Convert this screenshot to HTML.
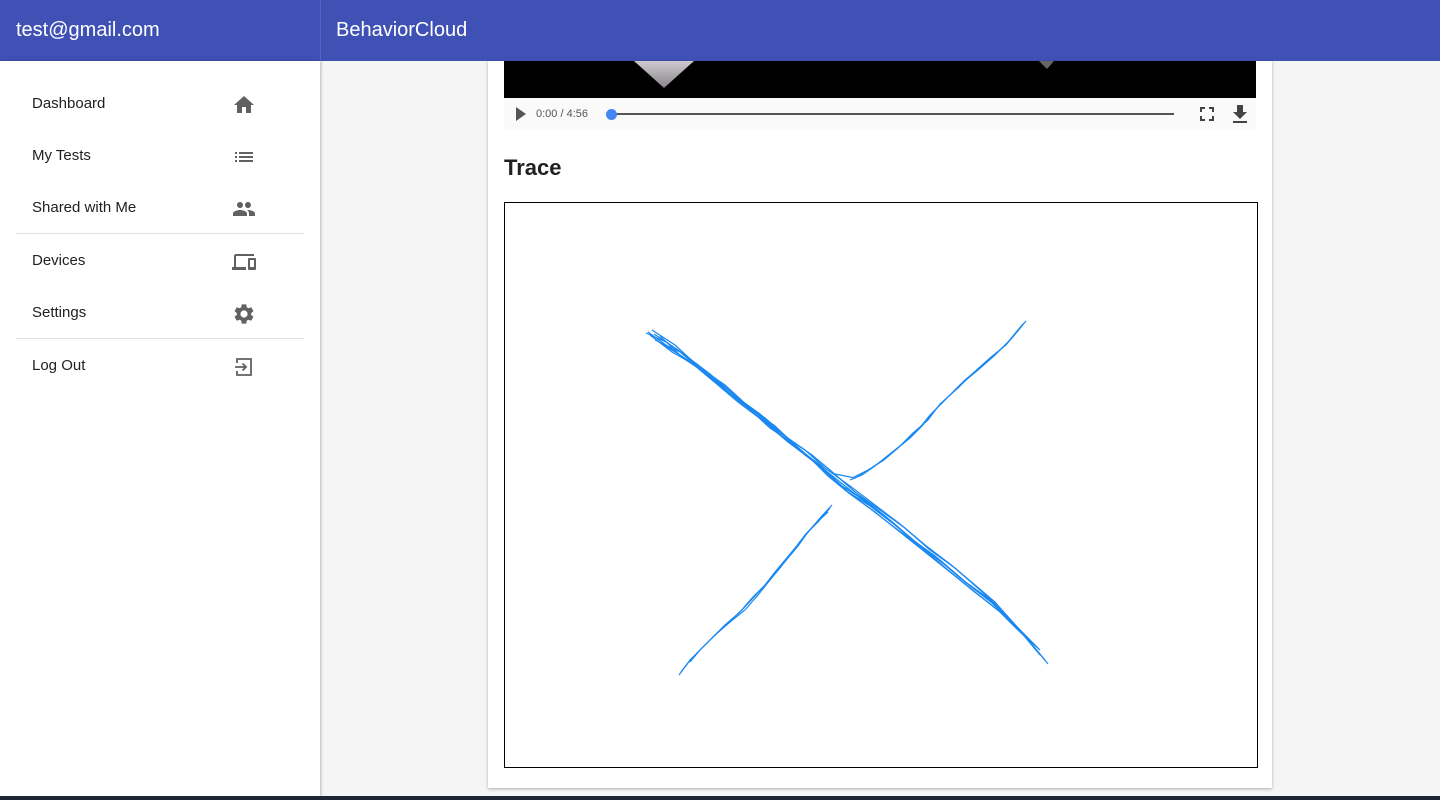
<!DOCTYPE html>
<html><head><style>
*{box-sizing:border-box;margin:0;padding:0}
body{width:1440px;height:800px;overflow:hidden;background:#f5f5f5;font-family:"Liberation Sans",Roboto,sans-serif;position:relative}
.top{position:absolute;left:0;top:0;width:1440px;height:61px;background:#3f51b5;color:#fff;font-size:20px}
.top .a{position:absolute;left:16px;top:19px}
.top .b{position:absolute;left:336px;top:19px}
.top .sep{position:absolute;left:320px;top:0;width:1px;height:61px;background:#5566c0}
.side{position:absolute;left:0;top:61px;width:320px;height:735px;background:#fff;box-shadow:1px 0 3px rgba(0,0,0,.25)}
.item{position:absolute;left:32px;font-size:15px;color:#212121}
.ic{position:absolute;left:232px}
.hr{position:absolute;left:16px;width:288px;height:1px;background:#e0e0e0}
.card{position:absolute;left:488px;top:61px;width:784px;height:727px;background:#fff;box-shadow:0 1px 3px rgba(0,0,0,.3)}
.bottom{position:absolute;left:0;top:796px;width:1440px;height:4px;background:#1e2535}
</style></head><body>
<div class="top"><span class="a">test@gmail.com</span><div class="sep"></div><span class="b">BehaviorCloud</span></div>
<div class="side">
<div class="item" style="top:34px">Dashboard</div>
<svg class="ic" style="top:32px" width="24" height="24" viewBox="0 0 24 24"><path fill="#616161" d="M10 20v-6h4v6h5v-8h3L12 3 2 12h3v8z"/></svg>
<div class="item" style="top:86px">My Tests</div>
<svg class="ic" style="top:84px" width="24" height="24" viewBox="0 0 24 24"><path fill="#616161" d="M3 13h2v-2H3v2zm0 4h2v-2H3v2zm0-8h2V7H3v2zm4 4h14v-2H7v2zm0 4h14v-2H7v2zM7 7v2h14V7H7z"/></svg>
<div class="item" style="top:138px">Shared with Me</div>
<svg class="ic" style="top:136px" width="24" height="24" viewBox="0 0 24 24"><path fill="#616161" d="M16 11c1.66 0 2.99-1.34 2.99-3S17.66 5 16 5c-1.66 0-3 1.34-3 3s1.34 3 3 3zm-8 0c1.66 0 2.99-1.34 2.99-3S9.66 5 8 5C6.34 5 5 6.34 5 8s1.34 3 3 3zm0 2c-2.33 0-7 1.17-7 3.5V19h14v-2.5c0-2.33-4.67-3.5-7-3.5zm8 0c-.29 0-.62.02-.97.05 1.16.84 1.97 1.97 1.97 3.45V19h6v-2.5c0-2.33-4.67-3.5-7-3.5z"/></svg>
<div class="hr" style="top:172px"></div>
<div class="item" style="top:191px">Devices</div>
<svg class="ic" style="top:189px" width="24" height="24" viewBox="0 0 24 24"><path fill="#616161" d="M4 6h18V4H4c-1.1 0-2 .9-2 2v11H0v3h14v-3H4V6zm19 2h-6c-.55 0-1 .45-1 1v10c0 .55.45 1 1 1h6c.55 0 1-.45 1-1V9c0-.55-.45-1-1-1zm-1 9h-4v-7h4v7z"/></svg>
<div class="item" style="top:243px">Settings</div>
<svg class="ic" style="top:241px" width="24" height="24" viewBox="0 0 24 24"><path fill="#616161" d="M19.14 12.94c.04-.3.06-.61.06-.94 0-.32-.02-.64-.07-.94l2.03-1.58a.49.49 0 00.12-.61l-1.92-3.32a.49.49 0 00-.59-.22l-2.39.96c-.5-.38-1.030-.7-1.62-.94l-.36-2.54a.48.48 0 00-.48-.41h-3.84c-.24 0-.43.17-.47.41l-.36 2.54c-.59.24-1.13.57-1.62.94l-2.39-.96a.48.48 0 00-.59.22L2.74 8.87c-.12.21-.08.47.12.61l2.03 1.58c-.05.3-.09.63-.09.94s.02.64.07.94l-2.03 1.58a.49.49 0 00-.12.61l1.920 3.32c.12.22.37.29.59.22l2.39-.96c.5.38 1.03.7 1.62.94l.36 2.54c.05.24.24.41.48.41h3.84c.24 0 .44-.17.47-.41l.36-2.54c.59-.24 1.13-.56 1.62-.94l2.39.96c.22.08.47 0 .59-.22l1.92-3.32c.12-.22.07-.47-.12-.61l-2.01-1.58zM12 15.6A3.6 3.6 0 1112 8.4a3.6 3.6 0 010 7.2z"/></svg>
<div class="hr" style="top:277px"></div>
<div class="item" style="top:296px">Log Out</div>
<svg class="ic" style="top:294px" width="24" height="24" viewBox="0 0 24 24"><path fill="none" stroke="#616161" stroke-width="1.8" d="M5 8V4h14v16H5v-4M3 12h11M10.5 8.5 14 12l-3.5 3.5"/></svg>
</div>
<div class="card">
<div style="position:absolute;left:16px;top:0;width:752px;height:37px;background:#000;overflow:hidden">
<svg width="752" height="37"><defs><linearGradient id="g" x1="0" x2="0" y1="0" y2="1"><stop offset="0" stop-color="#cfcacf"/><stop offset="1" stop-color="#8a858a"/></linearGradient></defs><polygon points="130,0 190,0 160,27" fill="url(#g)"/><polygon points="535,0 550,0 543,8" fill="#666"/></svg></div>
<div style="position:absolute;left:16px;top:37px;width:752px;height:32px;background:#fafafa">
<svg style="position:absolute;left:10px;top:9px" width="14" height="14"><polygon points="2,0 12,7 2,14" fill="#555"/></svg>
<span style="position:absolute;left:32px;top:10px;font-size:11px;color:#555">0:00 / 4:56</span>
<div style="position:absolute;left:107px;top:15px;width:563px;height:2px;background:#555"></div>
<div style="position:absolute;left:102px;top:11px;width:11px;height:11px;border-radius:50%;background:#4285f4"></div>
<svg style="position:absolute;left:696px;top:9px" width="14" height="14"><path d="M1 5V1h4M9 1h4v4M13 9v4H9M5 13H1V9" fill="none" stroke="#444" stroke-width="2"/></svg>
<svg style="position:absolute;left:727px;top:6px" width="18" height="20"><path d="M6 1h6v7h4l-7 7-7-7h4z M2 17h14v2H2z" fill="#444"/></svg>
</div>
<div style="position:absolute;left:16px;top:94px;font-size:22px;font-weight:bold;color:#212121">Trace</div>
<div style="position:absolute;left:16px;top:141px;width:754px;height:566px;border:1px solid #000">
<svg width="752" height="564" viewBox="505 203 752 564" style="position:absolute;left:0;top:0">
<g fill="none" stroke="#1a88f0" stroke-width="1.2">
<path d="M648 332 L670 348 L690 362 L715 378 L740 400 L765 418 L790 440 L812 455 L830 470 L855 492 L880 510 L905 528 L930 550 L955 568 L980 590 L1000 608 L1020 630 L1048 664"/>
<path d="M650 335 L672 352 L695 365 L720 386 L745 405 L770 428 L795 445 L815 462 L835 478 L860 498 L885 516 L910 538 L935 556 L960 578 L985 596 L1005 614 L1025 636 L1045 660"/>
<path d="M652 330 L675 345 L700 368 L725 385 L750 408 L775 426 L800 450 L820 465 L840 485 L865 500 L890 520 L915 542 L940 560 L965 582 L990 600 L1010 620 L1030 640"/>
<path d="M655 340 L680 352 L705 372 L730 394 L755 412 L780 434 L805 455 L825 470 L845 490 L870 506 L895 525 L920 546 L945 565 L970 586 L995 605 L1015 626 L1035 645"/>
<path d="M660 336 L683 358 L710 376 L735 398 L760 418 L785 436 L810 458 L828 476 L850 494 L875 512 L900 532 L925 552 L950 572 L975 592 L1000 612 L1020 632 L1040 650"/>
<path d="M646 333 L666 342 L685 355 L710 374 L735 396 L760 414 L785 436 L805 450 L825 468 L850 486 L875 505 L900 524 L925 545 L950 564 L975 585 L995 602 L1015 625 L1040 655"/>
<path d="M654 334 L678 350 L702 370 L728 390 L752 410 L778 430 L802 452 L822 468 L842 486 L868 503 L892 522 L918 544 L942 562 L968 584 L992 603 L1012 622 L1032 642 L1038 648"/>
<path d="M662 344 L688 360 L712 380 L738 402 L762 420 L788 442 L812 460 L832 478 L848 492 L872 510 L898 530 L922 548 L948 570 L972 590 L998 610 L1018 630"/>
<path d="M1026 321 L1012 338 L1000 350 L982 366 L965 380 L950 395 L935 410 L922 426 L910 438 L895 450 L880 462 L866 472 L855 478 L835 474"/>
<path d="M1022 325 L1008 342 L995 355 L978 370 L960 385 L945 400 L930 415 L918 430 L905 442 L890 454 L875 466 L862 475 L850 480"/>
<path d="M1024 323 L1006 345 L990 358 L972 374 L958 388 L940 404 L928 420 L912 434 L898 448 L884 460 L868 470 L852 478"/>
<path d="M832 505 L820 518 L810 530 L800 542 L790 555 L780 568 L770 580 L758 595 L745 610 L730 622 L715 635 L702 648 L690 660 L679 675"/>
<path d="M828 512 L815 524 L805 535 L795 548 L785 560 L775 572 L765 585 L752 598 L740 612 L725 625 L710 640 L698 652 L688 663 L681 672"/>
<path d="M830 508 L818 522 L808 532 L798 546 L788 558 L776 572 L766 584 L755 596 L742 610 L728 623 L712 638 L700 650 L690 662"/>
</g></svg>
</div>
</div>
<div class="bottom"></div>
</body></html>
